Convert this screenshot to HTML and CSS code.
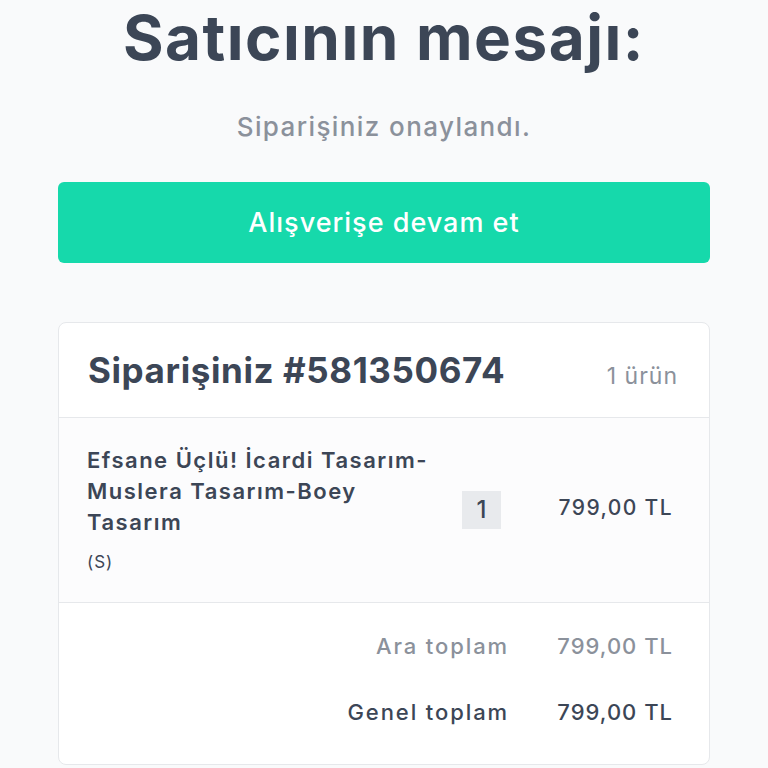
FILE: index.html
```html
<!DOCTYPE html>
<html lang="tr">
<head>
    <meta charset="UTF-8">
    <meta name="viewport" content="width=device-width, initial-scale=1.0">
    <title>Sipariş onayı</title>
    <link rel="stylesheet" href="styles.css">
</head>
<body>
    <div class="page">
        <h1 class="title">Satıcının mesajı:</h1>
        <p class="subtitle">Siparişiniz onaylandı.</p>
        <button class="continueBtn">Alışverişe devam et</button>

        <div class="order">
            <div class="order-head">
                <h2>Siparişiniz #581350674</h2>
                <span class="count">1 ürün</span>
            </div>
            <div class="order-item">
                <div class="item-info">
                    <p class="item-name">Efsane Üçlü! İcardi Tasarım-Muslera Tasarım-Boey Tasarım</p>
                    <p class="item-size">(S)</p>
                </div>
                <span class="item-qty">1</span>
                <span class="item-price">799,00 TL</span>
            </div>
            <div class="order-totals">
                <div class="total-row sub">
                    <span>Ara toplam</span>
                    <span class="amount">799,00 TL</span>
                </div>
                <div class="total-row grand">
                    <span>Genel toplam</span>
                    <span class="amount">799,00 TL</span>
                </div>
            </div>
        </div>
    </div>
</body>
</html>
```

FILE: styles.css
```css
body {
    margin: 0;
    background-color: #f9fafb;
    font-family: Inter, "Noto Sans", sans-serif;
    color: #3c4656;
}

.page {
    padding: 0 58px;
}

.title {
    margin: 0;
    font-size: 62px;
    line-height: 76px;
    font-weight: 700;
    letter-spacing: 1.5px;
    text-align: center;
    color: #3c4656;
}

.subtitle {
    margin: 35px 0 0;
    font-size: 26px;
    line-height: 32px;
    font-weight: 500;
    letter-spacing: 1.4px;
    text-align: center;
    color: #8b919b;
}

.continueBtn {
    display: block;
    width: 100%;
    height: 81px;
    margin-top: 39px;
    border: none;
    border-radius: 6px;
    background-color: #16d9ab;
    color: white;
    font-family: inherit;
    font-size: 27px;
    font-weight: 500;
    letter-spacing: 1px;
    cursor: pointer;
}

.order {
    margin-top: 59px;
    background-color: white;
    border: 1px solid #e6e8eb;
    border-radius: 8px;
}

.order-head {
    display: flex;
    justify-content: space-between;
    align-items: center;
    height: 94px;
    padding: 0 31px 0 29px;
    border-bottom: 1px solid #e6e8eb;
}

.order-head h2 {
    margin: 0;
    font-size: 35px;
    font-weight: 700;
    letter-spacing: 0.6px;
}

.count {
    margin-top: 12px;
    font-size: 23px;
    letter-spacing: 1px;
    color: #8b919b;
}

.order-item {
    display: flex;
    align-items: center;
    height: 185px;
    padding: 0 36px 0 28px;
    box-sizing: border-box;
    background-color: #fcfcfd;
    border-bottom: 1px solid #e6e8eb;
}

.item-info {
    width: 345px;
    margin-top: -3px;
}

.item-name {
    margin: 0;
    font-size: 22px;
    line-height: 31px;
    font-weight: 600;
    letter-spacing: 1.5px;
}

.item-size {
    margin: 14px 0 0;
    font-size: 17px;
    letter-spacing: 1px;
}

.item-qty {
    width: 39px;
    height: 38px;
    margin-left: 30px;
    line-height: 38px;
    text-align: center;
    background-color: #e8eaed;
    font-size: 24px;
    font-weight: 500;
}

.item-price {
    margin-left: auto;
    margin-bottom: 6px;
    font-size: 21px;
    font-weight: 500;
    letter-spacing: 1.4px;
}

.order-totals {
    padding: 21px 36px 30px;
}

.total-row {
    display: flex;
    justify-content: flex-end;
    align-items: center;
    height: 44px;
    font-size: 22px;
    font-weight: 500;
    letter-spacing: 1.9px;
}

.total-row + .total-row {
    margin-top: 22px;
}

.total-row .amount {
    width: 164px;
    letter-spacing: 1px;
    text-align: right;
}

.sub {
    color: #8b919b;
}

.grand {
    color: #3c4656;
}
```
